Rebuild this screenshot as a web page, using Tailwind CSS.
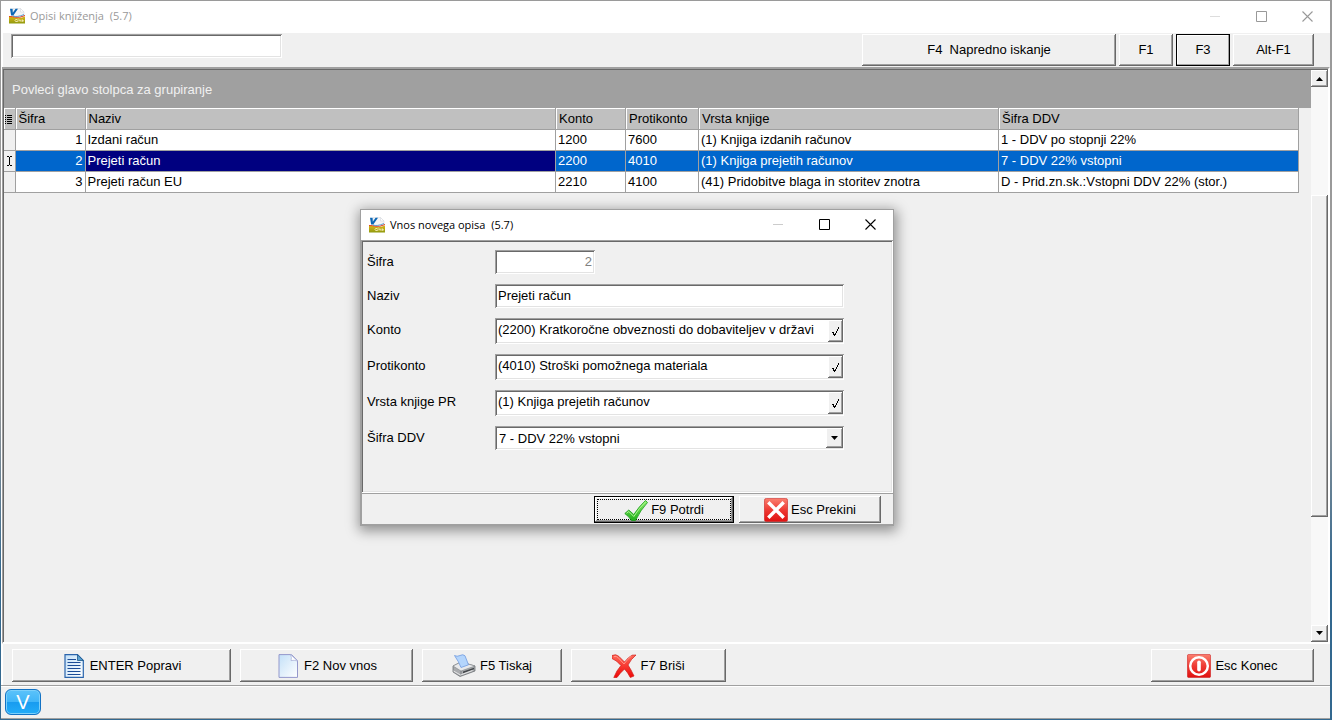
<!DOCTYPE html>
<html lang="sl">
<head>
<meta charset="utf-8">
<title>Opisi knjiženja (5.7)</title>
<script src="https://cdn.jsdelivr.net/npm/@tailwindcss/browser@4"></script>
</head>
<body class="h-screen overflow-hidden bg-[linear-gradient(#9a9a9a_0%,#9a9a9a_55%,#33688f_80%)] pt-px pl-px pr-0.5 pb-px font-['Liberation_Sans',Arial,sans-serif] text-[13px] leading-4 text-black">

<!-- icons shared by both windows -->
<svg class="absolute size-0" aria-hidden="true">
  <defs>
    <linearGradient id="gy" x1="0" y1="0" x2="0" y2="1"><stop offset="0" stop-color="#dcb414"/><stop offset="1" stop-color="#8f9a10"/></linearGradient>
    <linearGradient id="gp" x1="0" y1="0" x2="1" y2="1"><stop offset="0" stop-color="#c3e0f8"/><stop offset="1" stop-color="#ffffff"/></linearGradient>
    <linearGradient id="gr" x1="0" y1="0" x2="0" y2="1"><stop offset="0" stop-color="#fa8070"/><stop offset=".5" stop-color="#ee3a33"/><stop offset="1" stop-color="#e01010"/></linearGradient>
    <linearGradient id="gg" x1="0" y1="0" x2="0" y2="1"><stop offset="0" stop-color="#8cf06a"/><stop offset="1" stop-color="#1fae1a"/></linearGradient>
    <linearGradient id="gx" x1="0" y1="0" x2="0" y2="1"><stop offset="0" stop-color="#ff6a5a"/><stop offset="1" stop-color="#f00808"/></linearGradient>
    <symbol id="app" viewBox="0 0 16 16">
      <path d="M4 .5h7.500l3.500 3.500v9H4z" fill="#f4f5f7" stroke="#d5d8dc" stroke-width=".5"/>
      <path d="M11.500.5v3.500H15z" fill="#fff" stroke="#cfd3d8" stroke-width=".5"/>
      <path d="M0 9q4-.5 7 .8t9-1.300V15.500H0z" fill="url(#gy)"/>
      <path d="M0 8.500q4 0 7 .8t9-1.800" fill="none" stroke="#e0401c" stroke-width="1"/>
      <path d="M4 8q4 1.500 11-1.500" fill="none" stroke="#3a8fd0" stroke-width=".8"/>
      <path d="M1 .7h2.600l.2 4L6.600.7H9L4.300 7.500H2.100z" fill="#0b66b4"/>
      <path d="M8.500 11.500q-2.500-.5-2.500 1t2.500 1v-1M10 13.500v-2l2 2v-2M13.500 11.500v2l1.500-1" fill="none" stroke="#f6eebc" stroke-width=".9"/>
    </symbol>
    <symbol id="tick" viewBox="0 0 8 9"><path d="M6 0h1v2h-1zM5 2h1v2h-1zM4 4h1v2h-1zM3 6h1v2h-1zM2 8h1v1h-1zM1 5h1v3h-1zM0 5h1v1h-1zM2 7h1v1h-1z" fill="#000" shape-rendering="crispEdges"/></symbol>
    <symbol id="max" viewBox="0 0 11 11"><path d="M.5.5h10v10H.5z" fill="none" stroke="currentColor"/></symbol>
    <symbol id="close" viewBox="0 0 11 11"><path d="M.5.5l10 10M10.500.5l-10 10" fill="none" stroke="currentColor" stroke-width="1.100"/></symbol>
  </defs>
</svg>

<div class="flex h-full flex-col bg-[#f0f0f0]">
  <header class="flex h-8 shrink-0 items-center bg-white pb-0.5 pl-2 text-[#999]">
    <svg class="size-4"><use href="#app"/></svg>
    <h1 class="ml-[5px] flex-1 whitespace-pre font-['Open_Sans','Noto_Sans',sans-serif] text-[11px]">Opisi knjiženja  (5.7)</h1>
    <button aria-label="Pomanjšaj" class="flex w-[46px] justify-center"><span class="h-px w-2.5 bg-[#ddd]"></span></button>
    <button aria-label="Povečaj" class="flex w-[46px] justify-center"><svg class="size-[11px]"><use href="#max"/></svg></button>
    <button aria-label="Zapri" class="flex w-[46px] justify-center"><svg class="size-[11px]"><use href="#close"/></svg></button>
  </header>

  <div class="flex min-h-0 flex-1 flex-col border-l-2 border-white">
    <section class="flex h-[34px] shrink-0 items-start gap-[3px] pt-px pl-2 pr-4">
      <input aria-label="Iskanje" class="mr-auto h-6 w-[271px] bg-white px-1 outline-none shadow-[inset_1px_1px_0_#a0a0a0,inset_-1px_-1px_0_#fff,inset_2px_2px_0_#696969,inset_-2px_-2px_0_#e3e3e3]">
      <button class="h-8 w-[254px] whitespace-pre shadow-[inset_-1px_-1px_0_#696969,inset_1px_1px_0_#fff,inset_-2px_-2px_0_#a0a0a0]">F4  Napredno iskanje</button>
      <button class="h-8 w-[54px] shadow-[inset_-1px_-1px_0_#696969,inset_1px_1px_0_#fff,inset_-2px_-2px_0_#a0a0a0]">F1</button>
      <button class="h-8 w-[54px] border border-black shadow-[inset_-1px_-1px_0_#a0a0a0,inset_1px_1px_0_#fff]">F3</button>
      <button class="h-8 w-[81px] shadow-[inset_-1px_-1px_0_#696969,inset_1px_1px_0_#fff,inset_-2px_-2px_0_#a0a0a0]">Alt-F1</button>
    </section>

    <main class="-ml-px flex min-h-0 flex-1 border-t-2 border-r-2 border-b-2 border-l border-t-[#a0a0a0] border-r-white border-b-white border-l-[#a0a0a0]">
      <div class="flex min-w-0 flex-1 border-t border-l border-[#696969]">
        <div class="min-w-0 flex-1">
          <div class="flex h-[38px] items-center bg-[#a0a0a0] pt-0.5 pl-2 text-[#f0f0f0]">Povleci glavo stolpca za grupiranje</div>
          <div class="pr-3">
            <table class="w-full table-fixed border-collapse border-r border-[#a0a0a0] text-left">
              <colgroup><col class="w-[11px]"><col class="w-[70px]"><col><col class="w-[70px]"><col class="w-[73px]"><col class="w-[300px]"><col class="w-[300px]"></colgroup>
              <thead>
                <tr class="h-[21px] bg-[#c0c0c0] *:border-b *:border-b-[#a0a0a0] *:p-0 *:pt-0.5 *:pl-[3px] *:font-normal *:shadow-[inset_1px_1px_0_#fff] *:not-last:border-r *:not-last:border-r-[#a0a0a0]">
                  <th aria-label="Oznaka"><svg class="-ml-0.5 h-[11px] w-2" viewBox="0 0 8 11"><path d="M0 1.500h1m1 0h5M0 3.500h1m1 0h5M0 5.500h1m1 0h5M0 7.500h1m1 0h5M0 9.500h1m1 0h5" stroke="#000" fill="none"/></svg></th>
                  <th>Šifra</th><th>Naziv</th><th>Konto</th><th>Protikonto</th><th>Vrsta knjige</th><th>Šifra DDV</th>
                </tr>
              </thead>
              <tbody>
                <tr class="h-[21px] bg-white *:border-b *:border-[#a0a0a0] *:truncate *:p-0 *:pl-0.5 *:not-last:border-r">
                  <td class="bg-[#f0f0f0]"></td><td class="text-right"><span class="pr-0.5">1</span></td><td>Izdani račun</td><td>1200</td><td>7600</td><td>(1) Knjiga izdanih računov</td><td>1 - DDV po stopnji 22%</td>
                </tr>
                <tr class="h-[21px] bg-[#0066cc] text-white *:border-b *:border-[#a0a0a0] *:truncate *:p-0 *:pl-0.5 *:not-last:border-r">
                  <td class="bg-[#f0f0f0]"><svg class="h-[10px] w-[7px]" viewBox="0 0 7 10"><path d="M1 .5h2m1 0h2M3.500 1v8M1 9.500h2m1 0h2" stroke="#000" fill="none"/></svg></td><td class="text-right"><span class="pr-0.5">2</span></td><td class="bg-[#000080]">Prejeti račun</td><td>2200</td><td>4010</td><td>(1) Knjiga prejetih računov</td><td>7 - DDV 22% vstopni</td>
                </tr>
                <tr class="h-[21px] bg-white *:border-b *:border-[#a0a0a0] *:truncate *:p-0 *:pl-0.5 *:not-last:border-r">
                  <td class="bg-[#f0f0f0]"></td><td class="text-right"><span class="pr-0.5">3</span></td><td>Prejeti račun EU</td><td>2210</td><td>4100</td><td>(41) Pridobitve blaga in storitev znotra</td><td>D - Prid.zn.sk.:Vstopni DDV 22% (stor.)</td>
                </tr>
              </tbody>
            </table>
          </div>
        </div>
        <div class="flex w-[17px] shrink-0 flex-col bg-[#f8f8f8]">
          <button aria-label="Gor" class="flex h-[17px] shrink-0 items-center justify-center bg-[#f0f0f0] shadow-[inset_-1px_-1px_0_#696969,inset_1px_1px_0_#fff,inset_-2px_-2px_0_#a0a0a0]"><svg class="h-1 w-[7px]" viewBox="0 0 7 4"><path d="M0 4l3.500-4L7 4z"/></svg></button>
          <div class="flex-1"></div>
          <div class="flex-3 bg-[#f0f0f0] shadow-[inset_-1px_-1px_0_#696969,inset_1px_1px_0_#fff,inset_-2px_-2px_0_#a0a0a0]"></div>
          <div class="flex-1"></div>
          <button aria-label="Dol" class="flex h-[17px] shrink-0 items-center justify-center bg-[#f0f0f0] shadow-[inset_-1px_-1px_0_#696969,inset_1px_1px_0_#fff,inset_-2px_-2px_0_#a0a0a0]"><svg class="h-1 w-[7px]" viewBox="0 0 7 4"><path d="M0 0l3.500 4L7 0z"/></svg></button>
        </div>
      </div>
    </main>

    <nav class="flex h-[41px] shrink-0 items-start gap-[9px] pt-[5px] pl-[9px] pr-4">
      <button class="flex h-[33px] w-[219px] items-center justify-center gap-1 shadow-[inset_-1px_-1px_0_#696969,inset_1px_1px_0_#fff,inset_-2px_-2px_0_#a0a0a0]">
        <svg class="size-6" viewBox="0 0 24 24"><path d="M3 .7h12.500l5.800 5.800v16.800H3z" fill="url(#gp)" stroke="#2a64ac" stroke-width="1.200"/><path d="M15.500.7v5.800h5.800z" fill="#5ba0d0" stroke="#1c588c" stroke-width=".8"/><path d="M5.500 5.500h8.500M5.500 8.500h13M5.500 11.500h13M5.500 14.500h13M5.500 17.500h13M5.500 20.500h13" stroke="#1c4c96" stroke-width="1.200"/></svg>
        ENTER Popravi
      </button>
      <button class="flex h-[33px] w-[173px] items-center justify-center gap-1 shadow-[inset_-1px_-1px_0_#696969,inset_1px_1px_0_#fff,inset_-2px_-2px_0_#a0a0a0]">
        <svg class="size-6" viewBox="0 0 24 24"><path d="M3 .6h12.500l6 6v16.800H3z" fill="url(#gp)" stroke="#9498cc"/><path d="M14.500.6q1.500 3 .5 6 3-.8 6.500.4z" fill="#fff" stroke="#a5acd5" stroke-width=".7"/></svg>
        F2 Nov vnos
      </button>
      <button class="flex h-[33px] w-[140px] items-center justify-center gap-1 shadow-[inset_-1px_-1px_0_#696969,inset_1px_1px_0_#fff,inset_-2px_-2px_0_#a0a0a0]">
        <svg class="size-6" viewBox="0 0 24 24"><path d="M1 12l8-4 14 4v5L8 22.500 1 18z" fill="#a9abae" stroke="#606468" stroke-width=".7"/><path d="M1 12l8-4 14 4-14 5z" fill="#e8e9eb" stroke="#808488" stroke-width=".6"/><path d="M9 17v5" stroke="#75797d" stroke-width=".8"/><path d="M11 17.500l11-3.800v1.500l-11 4z" fill="#44484c"/><path d="M2.500 1.500Q5 3 8 1.500q3-1.700 5 .3l3.500 9L9 13.500Q7 8 2.500 1.500z" fill="#b4d5fc" stroke="#709ae0" stroke-width=".8"/><path d="M1.500 17l7 4 12-4.500" fill="none" stroke="#f4f4f4" stroke-width=".8"/></svg>
        F5 Tiskaj
      </button>
      <button class="mr-auto flex h-[33px] w-[155px] items-center justify-center gap-1 shadow-[inset_-1px_-1px_0_#696969,inset_1px_1px_0_#fff,inset_-2px_-2px_0_#a0a0a0]">
        <svg class="size-6" viewBox="0 0 24 24"><path d="M0 1.500Q4-.5 7 2.500l5.500 5.500Q16.500 3 20 1.200L24 1q-5 4-8 10 3 4.500 6 11l-3.700 1.500q-2.500-5-5.800-8.500Q8 19 5 23.500H1.800q2.700-7 7.200-12Q5 6.500 0 4.500z" fill="url(#gx)" stroke="#d01c18" stroke-width=".7"/><path d="M2 2.500q2.500-.5 4 1l6 6.500q3.500-5 7.500-8" fill="none" stroke="#ff9c90" stroke-width=".9"/></svg>
        F7 Briši
      </button>
      <button class="flex h-[33px] w-[163px] items-center justify-center gap-1 shadow-[inset_-1px_-1px_0_#696969,inset_1px_1px_0_#fff,inset_-2px_-2px_0_#a0a0a0]">
        <svg class="size-6" viewBox="0 0 24 24"><rect x=".4" y=".4" width="23.200" height="23.200" rx="1.500" fill="url(#gr)" stroke="#cf2020" stroke-width=".6"/><circle cx="12" cy="12" r="8.800" fill="none" stroke="#fff" stroke-width="2.500"/><path d="M12 8.300v7.400" stroke="#fff" stroke-width="3.600" stroke-linecap="round"/></svg>
        Esc Konec
      </button>
    </nav>
  </div>

  <footer class="flex h-[34px] shrink-0 items-start border-t border-b border-[#a0a0a0] pt-[3px] pl-1 shadow-[inset_0_1px_0_#fff]">
    <button class="h-[26px] w-9 rounded-md border border-[#1272c4] bg-[linear-gradient(#5cc3fa_0%,#40b5f8_48%,#189cf0_52%,#22acf8_100%)] text-[20px] leading-6 text-white shadow-[inset_0_0_0_1px_#7cd0fb]">V</button>
  </footer>
</div>

<!-- entry dialog, floating over the main window -->
<form role="dialog" aria-labelledby="dlg" class="absolute top-[209px] left-[360px] w-[534px] border border-b-2 border-[#a0a0a0] bg-[#f0f0f0] shadow-[1px_3px_12px_2px_rgba(0,0,0,0.4)]">
  <header class="flex h-[30px] items-center bg-white pb-px pl-2">
    <svg class="size-4"><use href="#app"/></svg>
    <h2 id="dlg" class="ml-[5px] flex-1 whitespace-pre font-['Open_Sans','Noto_Sans',sans-serif] text-[11px]">Vnos novega opisa  (5.7)</h2>
    <button type="button" aria-label="Pomanjšaj" class="flex w-[46px] justify-center"><span class="h-px w-2.5 bg-[#ccc]"></span></button>
    <button type="button" aria-label="Povečaj" class="flex w-[46px] justify-center"><svg class="size-[11px]"><use href="#max"/></svg></button>
    <button type="button" aria-label="Zapri" class="flex w-[46px] justify-center"><svg class="size-[11px]"><use href="#close"/></svg></button>
  </header>
  <div class="grid grid-cols-[128px_349px] items-center gap-y-2.5 pt-2.5 pb-[43px] pl-1.5 shadow-[inset_1px_1px_0_#a0a0a0,inset_-1px_-1px_0_#fff,inset_2px_2px_0_#696969,inset_-2px_-2px_0_#e3e3e3]">
    <label for="sifra">Šifra</label>
    <input id="sifra" value="2" readonly class="h-6 w-[100px] bg-white pr-[3px] pb-0.5 text-right text-[#808080] outline-none shadow-[inset_1px_1px_0_#a0a0a0,inset_-1px_-1px_0_#fff,inset_2px_2px_0_#696969,inset_-2px_-2px_0_#e3e3e3]">
    <label for="naziv">Naziv</label>
    <input id="naziv" value="Prejeti račun" class="h-6 bg-white pb-0.5 pl-[3px] outline-none shadow-[inset_1px_1px_0_#a0a0a0,inset_-1px_-1px_0_#fff,inset_2px_2px_0_#696969,inset_-2px_-2px_0_#e3e3e3]">
    <label for="konto" class="pb-0.5">Konto</label>
    <div class="flex h-[26px] bg-white py-0.5 pr-px pl-[3px] shadow-[inset_1px_1px_0_#a0a0a0,inset_-1px_-1px_0_#fff,inset_2px_2px_0_#696969,inset_-2px_-2px_0_#e3e3e3]">
      <input id="konto" value="(2200) Kratkoročne obveznosti do dobaviteljev v državi" class="min-w-0 flex-1 pb-0.5 outline-none">
      <button type="button" aria-label="Izberi konto" class="flex w-[15px] items-center justify-center bg-[#f0f0f0] shadow-[inset_-1px_-1px_0_#696969,inset_1px_1px_0_#fff,inset_-2px_-2px_0_#a0a0a0]"><svg class="h-[9px] w-2"><use href="#tick"/></svg></button>
    </div>
    <label for="proti" class="pb-0.5">Protikonto</label>
    <div class="flex h-[26px] bg-white py-0.5 pr-px pl-[3px] shadow-[inset_1px_1px_0_#a0a0a0,inset_-1px_-1px_0_#fff,inset_2px_2px_0_#696969,inset_-2px_-2px_0_#e3e3e3]">
      <input id="proti" value="(4010) Stroški pomožnega materiala" class="min-w-0 flex-1 pb-0.5 outline-none">
      <button type="button" aria-label="Izberi protikonto" class="flex w-[15px] items-center justify-center bg-[#f0f0f0] shadow-[inset_-1px_-1px_0_#696969,inset_1px_1px_0_#fff,inset_-2px_-2px_0_#a0a0a0]"><svg class="h-[9px] w-2"><use href="#tick"/></svg></button>
    </div>
    <label for="vrsta" class="pb-0.5">Vrsta knjige PR</label>
    <div class="flex h-[26px] bg-white py-0.5 pr-px pl-[3px] shadow-[inset_1px_1px_0_#a0a0a0,inset_-1px_-1px_0_#fff,inset_2px_2px_0_#696969,inset_-2px_-2px_0_#e3e3e3]">
      <input id="vrsta" value="(1) Knjiga prejetih računov" class="min-w-0 flex-1 pb-0.5 outline-none">
      <button type="button" aria-label="Izberi knjigo" class="flex w-[15px] items-center justify-center bg-[#f0f0f0] shadow-[inset_-1px_-1px_0_#696969,inset_1px_1px_0_#fff,inset_-2px_-2px_0_#a0a0a0]"><svg class="h-[9px] w-2"><use href="#tick"/></svg></button>
    </div>
    <label for="ddv">Šifra DDV</label>
    <div class="relative h-6">
      <select id="ddv" class="size-full appearance-none bg-white pt-px pl-1 outline-none shadow-[inset_1px_1px_0_#a0a0a0,inset_-1px_-1px_0_#fff,inset_2px_2px_0_#696969,inset_-2px_-2px_0_#e3e3e3]"><option>7 - DDV 22% vstopni</option><option>1 - DDV po stopnji 22%</option></select>
      <span class="pointer-events-none absolute inset-y-0.5 right-px flex w-[17px] items-center justify-center bg-[#f0f0f0] shadow-[inset_-1px_-1px_0_#696969,inset_1px_1px_0_#fff,inset_-2px_-2px_0_#a0a0a0]"><svg class="h-1 w-[7px]" viewBox="0 0 7 4"><path d="M0 0l3.500 4L7 0z"/></svg></span>
    </div>
  </div>
  <footer class="flex items-start justify-end gap-[5px] border-t border-l border-[#a0a0a0] pt-0.5 pr-3 pb-px">
    <button type="button" class="h-[27px] w-[140px] border border-black p-0.5 shadow-[inset_-1px_-1px_0_#696969,inset_1px_1px_0_#fff,inset_-2px_-2px_0_#a0a0a0]">
      <span class="flex h-full items-center justify-center gap-[3px] border border-dotted border-black">
        <svg class="size-6" viewBox="0 0 24 24"><path d="M.8 15.500l4-3.500 5 4.500Q15 8.500 21.500 2.500l2 2Q16.500 12 11.500 22.500H7.500Q4.500 18 .8 15.500z" fill="url(#gg)" stroke="#189a18" stroke-width=".8"/><path d="M2.500 15.300l2.300-1.800 5 5Q15 10 21.500 4" fill="none" stroke="#b5fa98" stroke-width=".9"/></svg>
        F9 Potrdi
      </span>
    </button>
    <button type="button" class="flex h-[27px] w-[142px] items-center justify-center gap-[3px] shadow-[inset_-1px_-1px_0_#696969,inset_1px_1px_0_#fff,inset_-2px_-2px_0_#a0a0a0]">
      <svg class="size-6" viewBox="0 0 24 24"><rect x=".4" y=".4" width="23.200" height="23.200" rx="2" fill="url(#gr)" stroke="#c82020" stroke-width=".6"/><path d="M5.500 5.500l13 13M18.500 5.500l-13 13" stroke="#fff" stroke-width="3.400" stroke-linecap="square"/></svg>
      Esc Prekini
    </button>
  </footer>
</form>
</body>
</html>
